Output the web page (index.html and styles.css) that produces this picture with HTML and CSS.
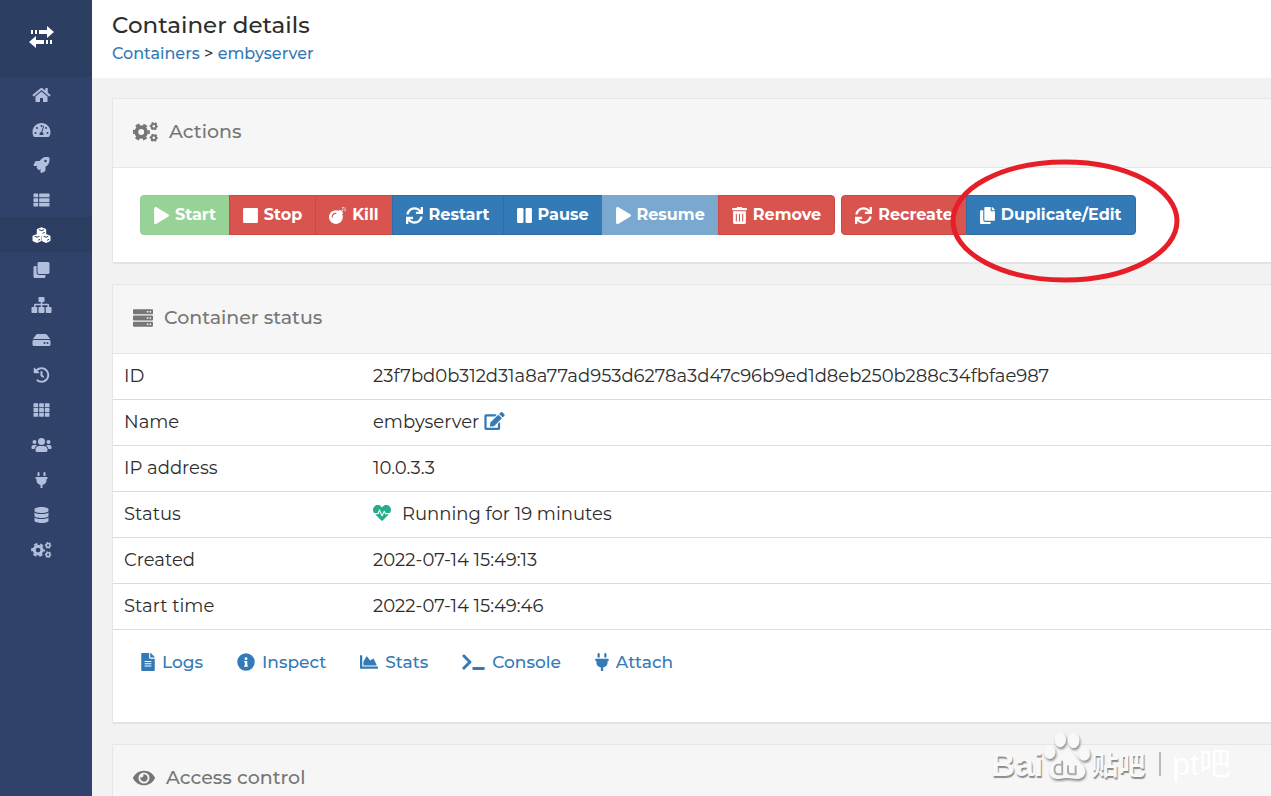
FILE: index.html
```html
<!DOCTYPE html>
<html lang="en">
<head>
<meta charset="utf-8">
<title>Container details</title>
<link rel="stylesheet" href="styles.css">
</head>
<body>
<svg class="sprite" aria-hidden="true">
  <symbol id="home" viewBox="0 0 576 512"><path d="M280.37 148.26L96 300.11V464a16 16 0 0 0 16 16l112.06-.29a16 16 0 0 0 15.92-16V368a16 16 0 0 1 16-16h64a16 16 0 0 1 16 16v95.64a16 16 0 0 0 16 16.05L464 480a16 16 0 0 0 16-16V300L295.67 148.26a12.19 12.19 0 0 0-15.3 0zM571.6 251.47L488 182.56V44.05a12 12 0 0 0-12-12h-56a12 12 0 0 0-12 12v72.61L318.47 43a48 48 0 0 0-61 0L4.34 251.47a12 12 0 0 0-1.6 16.9l25.5 31A12 12 0 0 0 45.15 301l235.22-193.74a12.19 12.19 0 0 1 15.3 0L530.9 301a12 12 0 0 0 16.9-1.6l25.5-31a12 12 0 0 0-1.7-16.93z"/></symbol>
  <symbol id="gauge" viewBox="0 0 576 512"><path fill-rule="evenodd" d="M288 32C129 32 0 161 0 320c0 53 14 102 39 145 6 10 16 15 28 15h442c12 0 22-5 28-15 25-43 39-92 39-145C576 161 447 32 288 32zM288 96a32 32 0 1 1 0 64 32 32 0 0 1 0-64zM96 384a32 32 0 1 1 0-64 32 32 0 0 1 0 64zM144 224a32 32 0 1 1 0-64 32 32 0 0 1 0 64zM368 142l-56 184c24 10 40 32 40 58 0 12-3 23-8 32H232c-5-9-8-20-8-32 0-32 25-60 58-64l56-187c6-20 36-10 30 9zM432 224a32 32 0 1 1 0-64 32 32 0 0 1 0 64zM480 384a32 32 0 1 1 0-64 32 32 0 0 1 0 64z"/></symbol>
  <symbol id="rocket" viewBox="0 0 512 512"><path d="M505.1 19.1c-1.2-5.500-6.700-11-12.200-12.200C460.700 0 435.500 0 410.400 0 307.200 0 245.300 55.200 199 128H94.800c-16.300 0-35.500 11.900-42.900 26.500L2.500 253.300A28.400 28.400 0 0 0 0 264a24 24 0 0 0 24 24h103.800l-22.500 22.500c-11.300 11.300-13 32.200 0 45.200l50.900 50.900c11.200 11.200 32.200 13.200 45.300 0l22.500-22.500V488a24 24 0 0 0 24 24 28.600 28.600 0 0 0 10.700-2.500l98.700-49.400c14.700-7.300 26.600-26.500 26.600-42.900V312.800c72.600-46.300 128-108.400 128-211.100 0-25.200 0-50.400-6.900-82.600zM384 168a40 40 0 1 1 0-80 40 40 0 0 1 0 80z"/></symbol>
  <symbol id="list" viewBox="0 0 512 512"><g><rect y="48" width="149" height="120" rx="16"/><rect y="196" width="149" height="120" rx="16"/><rect y="344" width="149" height="120" rx="16"/><rect x="181" y="48" width="331" height="120" rx="16"/><rect x="181" y="196" width="331" height="120" rx="16"/><rect x="181" y="344" width="331" height="120" rx="16"/></g></symbol>
  <symbol id="cubes" viewBox="0 0 18 16"><path d="M9 .2l4 1.500.7.900v4.400L9 8.900 4.300 7V2.600l.7-.9zM4.500 7l4.100 1.600.2.700v4.600l-4.300 2L.5 14.200 0 13.400V9.200l.5-.8zM13.500 7l4 1.400.5.800v4.200l-.5.800-4 1.700-4.300-2V9.300l.2-.7z"/><path class="cut" d="M6.500 2.700l2.500.9 2.500-.9M10 6.400l2.200-1M2.200 9.300l2.500.9 2.300-.9M5.600 13.300l2-1M11.100 9.300l2.500.9 2.300-.9M14.600 13.300l2-1"/></symbol>
  <symbol id="clone" viewBox="0 0 512 512"><path d="M464 0c26 0 48 22 48 48v288c0 26-22 48-48 48H176c-26 0-48-22-48-48V48c0-26 22-48 48-48zM176 416c-44 0-80-36-80-80V128H48c-26 0-48 22-48 48v288c0 26 22 48 48 48h288c26 0 48-22 48-48v-48z"/></symbol>
  <symbol id="sitemap" viewBox="0 0 640 512"><path d="M248 0h144q24 0 24 24v112q0 24-24 24h-48v56h182q34 0 34 36v68h56q24 0 24 24v144q0 24-24 24H480q-24 0-24-24V344q0-24 24-24h32v-56H344v56h48q24 0 24 24v144q0 24-24 24H248q-24 0-24-24V344q0-24 24-24h48v-56H128v56h32q24 0 24 24v144q0 24-24 24H24q-24 0-24-24V344q0-24 24-24h56v-68q0-36 34-36h182v-56h-48q-24 0-24-24V24q0-24 24-24z"/></symbol>
  <symbol id="hdd" viewBox="0 0 576 512"><path fill-rule="evenodd" d="M576 304v96c0 27-21 48-48 48H48c-27 0-48-21-48-48v-96c0-27 21-48 48-48h480c27 0 48 21 48 48zM528 224c17 0 34 5 48 14L462 85c-9-13-24-21-40-21H154c-16 0-31 8-40 21L0 238c14-9 31-14 48-14zM480 320a32 32 0 1 0 0 64 32 32 0 0 0 0-64zm-96 0a32 32 0 1 0 0 64 32 32 0 0 0 0-64z"/></symbol>
  <symbol id="history" viewBox="0 0 512 512"><path d="M504 255.500c.3 136.700-111.200 248.400-247.800 248.500-59 0-113.200-20.500-155.800-54.900-11.100-9-11.900-25.600-1.900-35.600l11.300-11.300c8.600-8.600 22.400-9.600 31.900-2C173 425.100 212.800 440 256 440c101.700 0 184-82.300 184-184 0-101.700-82.300-184-184-184-48.800 0-93.100 19-126 50l50.700 50.700c10 10 2.900 27.300-11.400 27.300H24c-8.800 0-16-7.200-16-16V38.600c0-14.200 17.200-21.400 27.300-11.300l49.400 49.400C129.200 34.100 189.600 8 256 8c136.800 0 247.700 110.800 248 247.500zM323 334.300l9.900-12.600c8.100-10.500 6.200-25.600-4.200-33.700L288 256.300V152c0-13.300-10.700-24-24-24h-16c-13.300 0-24 10.700-24 24v135.700l65.400 50.800c10.500 8.200 25.500 6.300 33.600-4.200z"/></symbol>
  <symbol id="grid" viewBox="0 0 512 512"><path d="M16 40h117q16 0 16 16v95q0 16-16 16H16q-16 0-16-16V56q0-16 16-16zM197 40h118q16 0 16 16v95q0 16-16 16H197q-16 0-16-16V56q0-16 16-16zM379 40h117q16 0 16 16v95q0 16-16 16H379q-16 0-16-16V56q0-16 16-16zM16 193h117q16 0 16 16v94q0 16-16 16H16q-16 0-16-16v-94q0-16 16-16zM197 193h118q16 0 16 16v94q0 16-16 16H197q-16 0-16-16v-94q0-16 16-16zM379 193h117q16 0 16 16v94q0 16-16 16H379q-16 0-16-16v-94q0-16 16-16zM16 345h117q16 0 16 16v95q0 16-16 16H16q-16 0-16-16v-95q0-16 16-16zM197 345h118q16 0 16 16v95q0 16-16 16H197q-16 0-16-16v-95q0-16 16-16zM379 345h117q16 0 16 16v95q0 16-16 16H379q-16 0-16-16v-95q0-16 16-16z"/></symbol>
  <symbol id="users" viewBox="0 0 640 512"><circle cx="96" cy="160" r="64"/><circle cx="544" cy="160" r="64"/><circle cx="320" cy="144" r="112"/><path d="M96 256h-32C29 256 0 285 0 320v32c0 18 14 32 32 32h66c6-46 34-84 74-106-11-14-27-22-44-22zM544 256h32c35 0 64 29 64 64v32c0 18-14 32-32 32h-66c-6-46-34-84-74-106 11-14 27-22 44-22zM243 288h154c64 0 115 52 115 115v29c0 27-21 48-48 48H176c-27 0-48-21-48-48v-29c0-63 51-115 115-115z"/></symbol>
  <symbol id="plug" viewBox="0 0 384 512"><path d="M320 32a32 32 0 0 0-64 0v96h64zm48 128H16A16 16 0 0 0 0 176v32a16 16 0 0 0 16 16h16v32a160 160 0 0 0 128 156.800V512h64v-99.200A160 160 0 0 0 352 256v-32h16a16 16 0 0 0 16-16v-32a16 16 0 0 0-16-16zM128 32a32 32 0 0 0-64 0v96h64z"/></symbol>
  <symbol id="database" viewBox="0 0 448 512"><path d="M448 73v46c0 40-100 73-224 73S0 159 0 119V73C0 33 100 0 224 0s224 33 224 73zM448 176v103c0 40-100 73-224 73S0 319 0 279V176c48 33 136 49 224 49s176-16 224-49zM448 336v103c0 40-100 73-224 73S0 479 0 439V336c48 33 136 49 224 49s176-16 224-49z"/></symbol>
  <symbol id="cogs" viewBox="0 0 640 512"><g fill="none" stroke="currentColor"><circle cx="210" cy="256" r="124" stroke-width="96"/><circle cx="210" cy="256" r="192" stroke-width="60" stroke-dasharray="106 95" stroke-dashoffset="53"/><circle cx="532" cy="108" r="58" stroke-width="48"/><circle cx="532" cy="108" r="88" stroke-width="36" stroke-dasharray="50 42.200" stroke-dashoffset="25"/><circle cx="532" cy="404" r="58" stroke-width="48"/><circle cx="532" cy="404" r="88" stroke-width="36" stroke-dasharray="50 42.200" stroke-dashoffset="25"/></g></symbol>
  <symbol id="play" viewBox="0 0 448 512"><path d="M424.400 214.700L72.400 6.600C43.800-10.300 0 6.100 0 47.900V464c0 37.500 40.700 60.100 72.400 41.300l352-208c31.400-18.500 31.500-64.100 0-82.600z"/></symbol>
  <symbol id="stop" viewBox="0 0 448 512"><rect y="32" width="448" height="448" rx="36"/></symbol>
  <symbol id="pause" viewBox="0 0 448 512"><rect y="32" width="192" height="448" rx="36"/><rect x="256" y="32" width="192" height="448" rx="36"/></symbol>
  <symbol id="bomb" viewBox="0 0 512 512"><path fill-rule="evenodd" d="M440 88l-52 52 27 27c9 9 9 25 0 34l-17 17c12 26 18 55 18 86 0 115-93 208-208 208S0 419 0 304 93 96 208 96c31 0 60 7 86 18l17-17c9-9 25-9 34 0l26 26 52-52zM112 304c0-53 43-96 96-96 9 0 16-7 16-16s-7-16-16-16c-71 0-128 57-128 128 0 9 7 16 16 16s16-7 16-16z"/><path d="M476 60h36v24h-36zM428 0h24v36h-24zM484 9l17 17-25 25-17-17zM459 110l17-17 25 25-17 17zM379 26l17-17 25 25-17 17z"/></symbol>
  <symbol id="sync" viewBox="0 0 512 512"><path d="M440.600 12.600l4 82.800C399.700 41.700 332.300 8 256.100 8 134.100 8 33.100 95.500 12.300 209.800 11 217.200 16.600 224 24.100 224h49c5.700 0 10.500-4 11.700-9.500C104 132.500 173.400 76 256 76c57.600 0 108.700 27.100 141.700 69.200l-86.500-4.100c-6.900-.3-12.600 5.100-12.600 12v47.400c0 6.600 5.400 12 12 12H500c6.600 0 12-5.400 12-12V12c0-6.600-5.400-12-12-12h-47.400c-6.900 0-12.300 5.700-12 12.600zM255.800 432c-57.600 0-108.400-27.100-141.500-69.200l86.500 4.100c6.900.3 12.600-5.100 12.600-12v-47.400c0-6.600-5.400-12-12-12H12c-6.600 0-12 5.400-12 12V500c0 6.600 5.400 12 12 12h47.400c6.900 0 12.300-5.700 12-12.600l-4-82.600C112.300 470.300 179.700 504 255.900 504c122 0 223-87.500 243.800-201.800 1.300-7.400-4.300-14.200-11.800-14.200h-49c-5.700 0-10.500 4-11.700 9.500C408 379.500 338.400 432 255.800 432z"/></symbol>
  <symbol id="trash" viewBox="0 0 448 512"><path fill-rule="evenodd" d="M32 464a48 48 0 0 0 48 48h288a48 48 0 0 0 48-48V128H32zM304 208q16-16 32 0v224q-16 16-32 0zM208 208q16-16 32 0v224q-16 16-32 0zM112 208q16-16 32 0v224q-16 16-32 0zM432 32H312l-9-19A24 24 0 0 0 281 0H167a24 24 0 0 0-22 13l-9 19H16A16 16 0 0 0 0 48v32a16 16 0 0 0 16 16h416a16 16 0 0 0 16-16V48a16 16 0 0 0-16-16z"/></symbol>
  <symbol id="copy" viewBox="0 0 448 512"><path d="M320 448v40c0 13-11 24-24 24H24c-13 0-24-11-24-24V120c0-13 11-24 24-24h72v296c0 31 25 56 56 56zM320 112V0H152c-13 0-24 11-24 24v368c0 13 11 24 24 24h272c13 0 24-11 24-24V128H336c-9 0-16-7-16-16zM441 73L375 7c-4-5-11-7-23-7v96h96c0-12-2-18-7-23z"/></symbol>
  <symbol id="server" viewBox="0 0 512 512"><path fill-rule="evenodd" d="M24 32h464q24 0 24 24v80q0 24-24 24H24q-24 0-24-24V56q0-24 24-24zM24 192h464q24 0 24 24v80q0 24-24 24H24q-24 0-24-24v-80q0-24 24-24zM24 352h464q24 0 24 24v80q0 24-24 24H24q-24 0-24-24v-80q0-24 24-24zM352 76v40h40V76zm72 0v40h40V76zM352 236v40h40v-40zm72 0v40h40v-40zM352 396v40h40v-40zm72 0v40h40v-40z"/></symbol>
  <symbol id="edit" viewBox="0 0 576 512"><path d="M402.600 83.200l90.200 90.200c3.800 3.800 3.800 10 0 13.800L274.400 405.600l-92.800 10.300c-12.400 1.400-22.900-9.100-21.500-21.500l10.300-92.800L388.800 83.200c3.800-3.800 10-3.800 13.800 0zm162-22.900l-48.800-48.800c-15.200-15.200-39.900-15.200-55.200 0l-35.400 35.400c-3.800 3.800-3.800 10 0 13.800l90.200 90.200c3.800 3.800 10 3.800 13.800 0l35.400-35.400c15.200-15.300 15.200-40 0-55.200zM384 346.200V448H64V128h229.800c3.200 0 6.200-1.300 8.500-3.500l40-40c7.600-7.600 2.200-20.500-8.500-20.500H48C21.500 64 0 85.500 0 112v352c0 26.500 21.500 48 48 48h352c26.500 0 48-21.500 48-48V306.200c0-10.700-12.900-16-20.500-8.500l-40 40c-2.200 2.300-3.500 5.300-3.500 8.500z"/></symbol>
  <symbol id="heart" viewBox="0 0 512 512"><path d="M320.200 243.800l-49.700 99.400c-6 12.100-23.400 11.700-28.900-.6l-56.900-126.300-30 71.700H60.600l182.500 186.500c7.100 7.300 18.600 7.300 25.700 0L451.400 288H342.300zM473.700 73.900l-2.400-2.500c-51.500-52.600-135.800-52.600-187.400 0L256 100l-27.900-28.500c-51.500-52.700-135.900-52.700-187.400 0l-2.400 2.400C-10.400 123.700-12.500 203 31 256h102.400l35.900-86.200c5.400-12.900 23.600-13.200 29.400-.4l58.200 129.300 49-97.900c5.900-11.800 22.700-11.800 28.600 0l27.600 55.200H481c43.500-53 41.400-132.300-7.300-182.100z"/></symbol>
  <symbol id="file" viewBox="0 0 384 512"><path fill-rule="evenodd" d="M224 136V0H24C11 0 0 11 0 24v464c0 13 11 24 24 24h336c13 0 24-11 24-24V160H248c-13 0-24-11-24-24zM96 224h192v32H96zM96 288h192v32H96zM96 352h192v32H96zM384 122v6H256V0h6c6 0 13 3 17 7l98 98c5 4 7 11 7 17z"/></symbol>
  <symbol id="info" viewBox="0 0 512 512"><path fill-rule="evenodd" d="M256 8a248 248 0 1 0 0 496 248 248 0 0 0 0-496zM256 118a42 42 0 1 1 0 84 42 42 0 0 1 0-84zM200 224h92v128h20v40H200v-40h24v-88h-24z"/></symbol>
  <symbol id="chart" viewBox="0 0 512 512"><path d="M500 384c7 0 12 5 12 12v40c0 7-5 12-12 12H12c-7 0-12-5-12-12V76c0-7 5-12 12-12h40c7 0 12 5 12 12v308zM373 160l-85 56-85-114c-5-7-16-6-20 1L96 248v104h384l-90-188c-3-6-11-8-17-4z"/></symbol>
  <symbol id="terminal" viewBox="0 0 640 512"><path d="M258 274L64 468c-10 9-25 9-34 0L7 445c-9-9-9-24 0-34l154-154L7 103c-9-10-9-25 0-34l23-23c9-9 24-9 34 0l194 194c9 9 9 25 0 34zM640 424v32c0 13-11 24-24 24H312c-13 0-24-11-24-24v-32c0-13 11-24 24-24h304c13 0 24 11 24 24z"/></symbol>
  <symbol id="eye" viewBox="0 0 576 512"><path d="M572.500 241.400C518.300 135.600 410.900 64 288 64S57.700 135.600 3.500 241.400a32.400 32.400 0 0 0 0 29.200C57.700 376.400 165.100 448 288 448s230.300-71.600 284.500-177.400a32.400 32.400 0 0 0 0-29.200zM288 400a144 144 0 1 1 0-288 144 144 0 0 1 0 288zm0-240a95.300 95.300 0 0 0-25.300 3.800 47.900 47.900 0 0 1-66.900 66.900A95.800 95.800 0 1 0 288 160z"/></symbol>
  <symbol id="swap" viewBox="0 0 26 22"><path d="M2 4h2v4H2zM6 4h2v4H6zM10 4h8V0l7 6-7 6V8h-8zM0 16l7-6v4h8v4H7v4zM17 14h2v4h-2zM21 14h2v4h-2z"/></symbol>
</svg>

<div class="app">
  <nav class="sidebar" aria-label="Main">
    <a class="brand" href="#" aria-label="Toggle menu"><svg class="icon-swap"><use href="#swap"/></svg></a>
    <a class="item" href="#" aria-label="Home"><svg class="i"><use href="#home"/></svg></a>
    <a class="item" href="#" aria-label="Dashboard"><svg class="i"><use href="#gauge"/></svg></a>
    <a class="item" href="#" aria-label="App templates"><svg class="i"><use href="#rocket"/></svg></a>
    <a class="item" href="#" aria-label="Stacks"><svg class="i"><use href="#list"/></svg></a>
    <a class="item active" href="#" aria-label="Containers"><svg class="i"><use href="#cubes"/></svg></a>
    <a class="item" href="#" aria-label="Images"><svg class="i"><use href="#clone"/></svg></a>
    <a class="item" href="#" aria-label="Networks"><svg class="i"><use href="#sitemap"/></svg></a>
    <a class="item" href="#" aria-label="Volumes"><svg class="i"><use href="#hdd"/></svg></a>
    <a class="item" href="#" aria-label="Events"><svg class="i"><use href="#history"/></svg></a>
    <a class="item" href="#" aria-label="Host"><svg class="i"><use href="#grid"/></svg></a>
    <a class="item" href="#" aria-label="Users"><svg class="i"><use href="#users"/></svg></a>
    <a class="item" href="#" aria-label="Endpoints"><svg class="i"><use href="#plug"/></svg></a>
    <a class="item" href="#" aria-label="Registries"><svg class="i"><use href="#database"/></svg></a>
    <a class="item" href="#" aria-label="Settings"><svg class="i"><use href="#cogs"/></svg></a>
  </nav>

  <div class="page">
    <header class="top">
      <h1>Container details</h1>
      <div class="crumbs"><a href="#">Containers</a> &gt; <a href="#">embyserver</a></div>
    </header>
    <main class="content">
      <section class="card">
        <h2 class="card-head"><svg class="wide"><use href="#cogs"/></svg>Actions</h2>
        <div class="actions">
          <div class="group">
            <button class="btn green" disabled><svg><use href="#play"/></svg>Start</button>
            <button class="btn red"><svg><use href="#stop"/></svg>Stop</button>
            <button class="btn red"><svg class="sq"><use href="#bomb"/></svg>Kill</button>
            <button class="btn blue"><svg class="sq"><use href="#sync"/></svg>Restart</button>
            <button class="btn blue"><svg><use href="#pause"/></svg>Pause</button>
            <button class="btn pale" disabled><svg><use href="#play"/></svg>Resume</button>
            <button class="btn red"><svg><use href="#trash"/></svg>Remove</button>
          </div>
          <div class="group">
            <button class="btn red"><svg class="sq"><use href="#sync"/></svg>Recreate</button>
            <button class="btn blue"><svg><use href="#copy"/></svg>Duplicate/Edit</button>
            <svg class="ring" viewBox="0 0 230 126" aria-hidden="true"><ellipse cx="115" cy="63" rx="112" ry="59"/></svg>
          </div>
        </div>
      </section>

      <section class="card">
        <h2 class="card-head"><svg class="mid"><use href="#server"/></svg>Container status</h2>
        <table class="status">
          <tbody>
            <tr><th scope="row">ID</th><td>23f7bd0b312d31a8a77ad953d6278a3d47c96b9ed1d8eb250b288c34fbfae987</td></tr>
            <tr><th scope="row">Name</th><td>embyserver <a href="#" aria-label="Edit name"><svg class="edit"><use href="#edit"/></svg></a></td></tr>
            <tr><th scope="row">IP address</th><td>10.0.3.3</td></tr>
            <tr><th scope="row">Status</th><td><svg class="heart"><use href="#heart"/></svg>Running for 19 minutes</td></tr>
            <tr><th scope="row">Created</th><td>2022-07-14 15:49:13</td></tr>
            <tr><th scope="row">Start time</th><td>2022-07-14 15:49:46</td></tr>
          </tbody>
        </table>
        <div class="links">
          <a href="#"><svg class="w14"><use href="#file"/></svg>Logs</a>
          <a href="#"><svg><use href="#info"/></svg>Inspect</a>
          <a href="#"><svg><use href="#chart"/></svg>Stats</a>
          <a href="#"><svg class="w22"><use href="#terminal"/></svg>Console</a>
          <a href="#"><svg class="w14"><use href="#plug"/></svg>Attach</a>
        </div>
      </section>

      <section class="card">
        <h2 class="card-head"><svg class="eye"><use href="#eye"/></svg>Access control</h2>
      </section>
    </main>
  </div>
</div>

<div class="mark">
  <span class="mark-logo">Bai</span>
  <svg class="paw" viewBox="0 0 50 52" aria-hidden="true"><ellipse cx="7" cy="22" rx="6" ry="7"/><ellipse cx="18" cy="9" rx="6" ry="8"/><ellipse cx="32" cy="10" rx="6" ry="8"/><ellipse cx="43" cy="24" rx="6" ry="7"/><path d="M25 21c-6 0-9 8-14 12-7 5-6 17 4 17 5 0 6-1 10-1s6 1 11 1c9 0 10-10 5-15-6-6-9-14-16-14z"/><path class="du" d="M20 31v14h-4q-4 0-4-5t4-5h4M26 36v6q0 3 3 3h5v-9"/></svg>
  <span class="mark-cn">贴吧</span>
  <span class="mark-bar"></span>
  <span class="mark-name">pt吧</span>
</div>
</body>
</html>
```

FILE: styles.css
```css
* { box-sizing: border-box; }

body {
  margin: 0;
  background: #f2f2f2;
  color: #2d2d2d;
  font-family: Montserrat, Inter, "Noto Sans CJK SC", sans-serif;
  font-size: 17px;
  font-weight: 500;
  line-height: 24px;
}

a { color: #337ab7; text-decoration: none; }
svg { fill: currentColor; flex: none; }
.sprite { position: absolute; width: 0; height: 0; }

.app {
  display: flex;
  height: 100vh;
  overflow: hidden;
}

/* Sidebar */
.sidebar {
  flex: none;
  width: 92px;
  background: #30426a;
}
.sidebar a {
  display: flex;
  align-items: center;
  justify-content: center;
  padding-right: 9px;
}
.brand {
  height: 77px;
  background: #2d3e63;
  color: #fff;
  padding-bottom: 3px;
}
.icon-swap { width: 26px; height: 22px; }
.item { height: 35px; color: #b2bfdc; }
.item.active { background: #2c3d62; color: #fff; }
.i { width: 21px; height: 16px; }
.cut { fill: none; stroke: #2c3d62; stroke-width: 1; }

/* Page */
.page { flex: 1; min-width: 0; }
.top {
  height: 78px;
  padding: 10px 20px;
  background: #fff;
}
h1 {
  margin: 0;
  font-size: 23px;
  line-height: 30px;
  font-weight: 500;
}
.crumbs { font-size: 16px; line-height: 28px; }
.content { padding: 20px 0 0 20px; }

.card {
  margin-bottom: 20px;
  background: #fff;
  border: 1px solid #e6e6e6;
  border-right: 0;
  border-bottom: 2px solid #e4e4e4;
  border-radius: 2px 0 0 2px;
}
.card-head {
  display: flex;
  align-items: center;
  gap: 11px;
  height: 69px;
  margin: 0;
  padding: 0 20px 2px;
  background: #f6f6f6;
  border-bottom: 1px solid #e6e6e6;
  color: #767676;
  font-size: 19px;
  font-weight: 500;
}
.wide { width: 25px; height: 20px; }
.mid { width: 20px; height: 20px; }
.eye { width: 22px; height: 20px; }

/* Buttons */
.actions {
  display: flex;
  gap: 6px;
  padding: 27px;
}
.group { position: relative; display: flex; }
.btn {
  display: flex;
  align-items: center;
  gap: 6px;
  height: 40px;
  padding: 0 13px;
  border: 1px solid;
  color: #fff;
  font: 700 16px/24px Montserrat, Inter, sans-serif;
  white-space: nowrap;
}
.btn + .btn { margin-left: -1px; }
.btn svg { width: 15px; height: 17px; }
.btn svg.sq { width: 17px; }
.btn:first-of-type { border-radius: 4px 0 0 4px; }
.btn:last-of-type { border-radius: 0 4px 4px 0; }
.green { background: #97d397; border-color: #94ca94; }
.red { background: #d9534f; border-color: #cb4945; }
.blue { background: #337ab7; border-color: #2e6da4; }
.pale { background: #7ba8cf; border-color: #7ba8cf; }
.ring {
  position: absolute;
  right: -44px;
  top: -37px;
  width: 230px;
  height: 126px;
  fill: none;
  stroke: #e61e28;
  stroke-width: 5;
  pointer-events: none;
}

/* Status table */
.status {
  width: 100%;
  border-spacing: 0;
  font-size: 18px;
  font-weight: 400;
}
.status th {
  width: 249px;
  text-align: left;
  font-weight: 400;
}
.status th, .status td {
  height: 46px;
  padding: 0 11px 2px;
  border-bottom: 1px solid #dcdcdc;
}
.edit { width: 21px; height: 18px; vertical-align: -2px; }
.heart { width: 18px; height: 18px; margin-right: 11px; vertical-align: -2px; color: #23ae89; }

.links {
  display: flex;
  gap: 34px;
  height: 92px;
  padding: 20px 28px;
}
.links a { display: flex; align-items: center; gap: 7px; height: 24px; }
.links svg { width: 18px; height: 18px; }
.links svg.w14 { width: 14px; }
.links svg.w22 { width: 23px; }

/* Watermark */
.mark {
  position: absolute;
  right: 40px;
  bottom: 10px;
  display: flex;
  align-items: center;
  height: 44px;
  color: #f8f8f8;
}
.mark-logo, .mark-cn {
  text-shadow: 1px 2px 1px #8c8c8c;
  font-weight: 700;
  line-height: 44px;
}
.mark-logo { font-family: "Liberation Sans", sans-serif; font-size: 34px; }
.mark-cn { font-family: "Noto Sans CJK SC", sans-serif; font-size: 27px; }
.paw {
  width: 48px;
  height: 52px;
  margin-bottom: 16px;
  filter: drop-shadow(1px 2px 1px #8c8c8c);
}
.du { fill: none; stroke: #aaa; stroke-width: 2; }
.mark-bar { width: 2px; height: 24px; margin: 0 11px 0 14px; background: #bbb; }
.mark-name { color: #fff; font: 32px/44px "Liberation Sans", "Noto Sans CJK SC", sans-serif; }
```
